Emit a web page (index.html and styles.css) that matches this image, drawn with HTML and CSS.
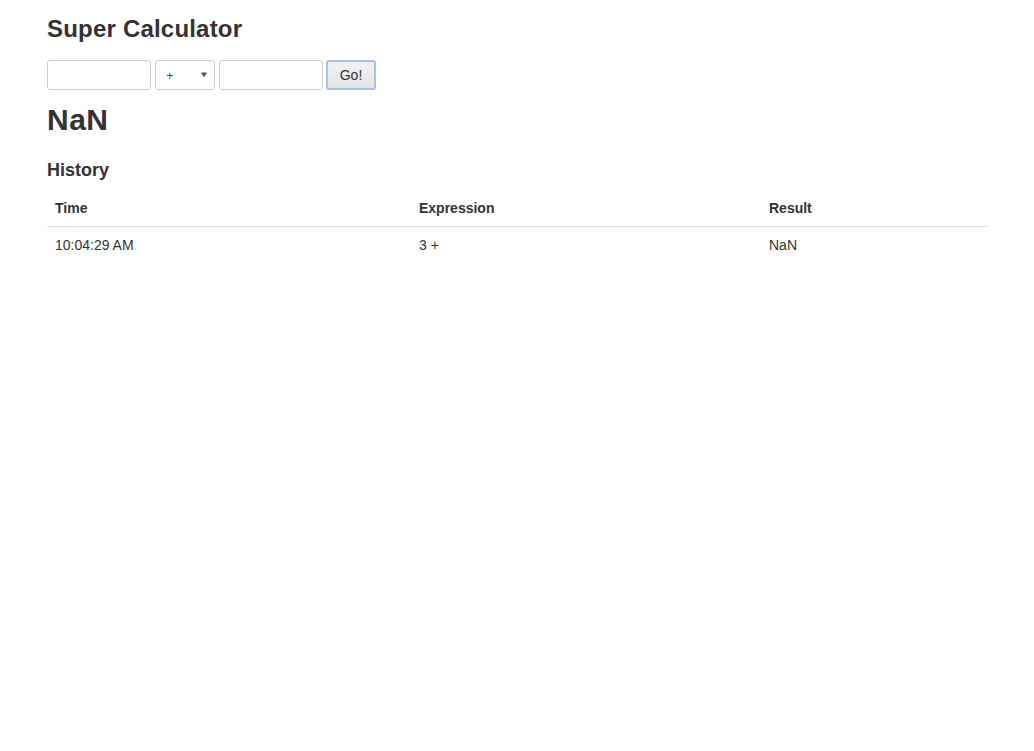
FILE: index.html
```html
<!DOCTYPE html>
<html>
<head>
<meta charset="utf-8">
<title>Super Calculator</title>
<link rel="stylesheet" href="styles.css">
</head>
<body>
<div class="container">
  <h3 class="title">Super Calculator</h3>
  <form class="calc">
    <input class="field" type="text">
    <select class="op"><option>+</option><option>-</option><option>*</option><option>/</option></select>
    <input class="field" type="text">
    <button class="go" type="button">Go!</button>
  </form>
  <h2 class="result">NaN</h2>
  <h4 class="history-title">History</h4>
  <table class="history">
    <thead>
      <tr><th class="c-time">Time</th><th class="c-expr">Expression</th><th class="c-res">Result</th></tr>
    </thead>
    <tbody>
      <tr><td>10:04:29 AM</td><td>3 +</td><td>NaN</td></tr>
    </tbody>
  </table>
</div>
</body>
</html>
```
FILE: styles.css
```css
html, body {
  margin: 0;
  padding: 0;
  background: #fff;
}
body {
  font-family: "Liberation Sans", Arial, Helvetica, sans-serif;
  font-size: 14px;
  line-height: 20px;
  color: #333;
}
.container {
  width: 940px;
  margin: 0 auto;
}
.title {
  font-size: 24px;
  font-weight: bold;
  line-height: 26px;
  margin: 16px 0 18px;
  letter-spacing: 0.2px;
}
.calc {
  display: flex;
  gap: 4px;
  height: 30px;
  margin: 0;
}
.field {
  box-sizing: border-box;
  width: 104px;
  height: 30px;
  border: 1px solid #ccc;
  border-radius: 3px;
  padding: 5px 10px;
  font-family: inherit;
  font-size: 12px;
  background: #fff;
  outline: none;
}
.op {
  box-sizing: border-box;
  width: 60px;
  height: 30px;
  border: 1px solid #ccc;
  border-radius: 3px;
  padding: 0 0 0 10px;
  font-family: inherit;
  font-size: 13px;
  color: #1f5d99;
  appearance: none;
  -webkit-appearance: none;
  background: #fff url("data:image/svg+xml;utf8,<svg xmlns='http://www.w3.org/2000/svg' width='6' height='6'><path d='M0 0.5h6L3 5.5z' fill='%23555'/></svg>") no-repeat right 7px center;
  outline: none;
}
.go {
  box-sizing: border-box;
  width: 50px;
  height: 30px;
  margin-left: -1px;
  border: 2px solid #a6c1ec;
  border-radius: 3px;
  background: linear-gradient(#f2f2f2, #e4e4e4);
  font-family: inherit;
  font-size: 14px;
  color: #333;
  padding: 0;
}
.result {
  font-size: 30px;
  font-weight: bold;
  line-height: 33px;
  margin: 13px 0 24px;
  letter-spacing: 0.5px;
}
.history-title {
  font-size: 18px;
  font-weight: bold;
  line-height: 20px;
  margin: 0 0 10px;
}
.history {
  width: 940px;
  border-collapse: collapse;
  border-spacing: 0;
}
.history th,
.history td {
  text-align: left;
  padding: 8px;
  line-height: 20px;
  vertical-align: top;
}
.history th {
  font-weight: bold;
  border-bottom: 1px solid #ddd;
}
.c-time { width: 348px; }
.c-expr { width: 334px; }
.c-res { width: 210px; }
```
